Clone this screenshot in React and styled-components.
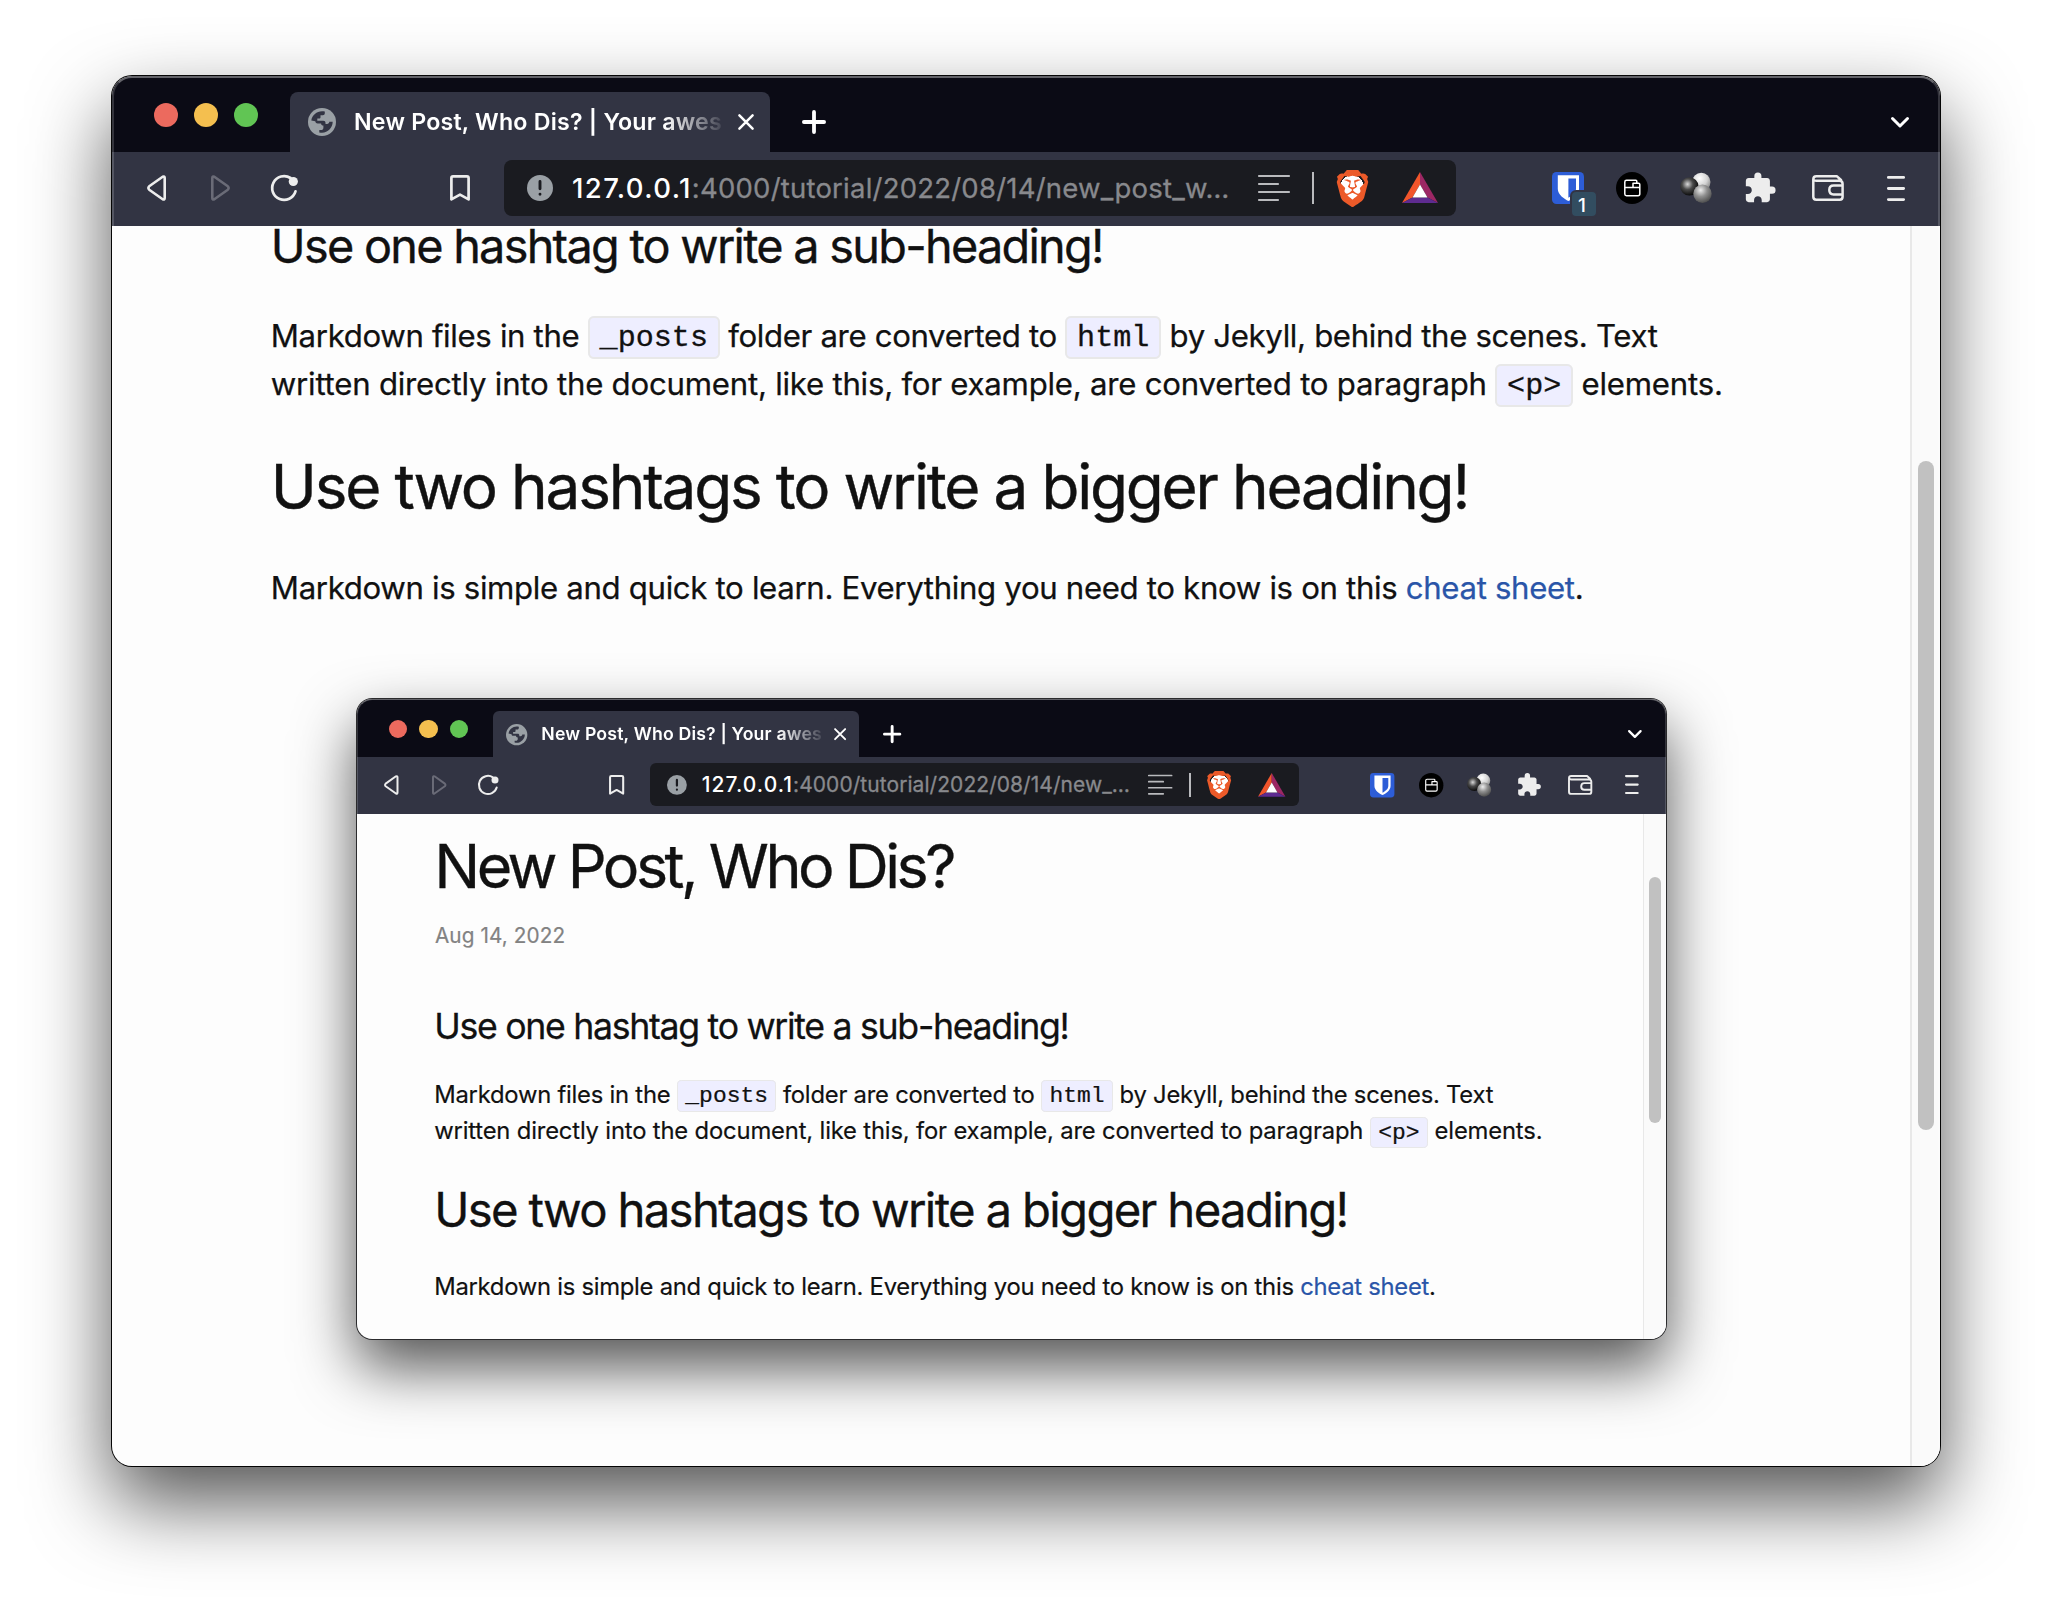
import React from "react";
import styled, { createGlobalStyle, css } from "styled-components";
import { SiBrave } from "react-icons/si";
import { MdExtension } from "react-icons/md";

/* Every length is expressed in window units, so a window can be drawn at any scale. */
const u = (n) => `calc(${n} * var(--u))`;

const GlobalStyle = createGlobalStyle`
  body {
    margin: 0;
    background: #fff;
    font-family: Inter, "Liberation Sans", sans-serif;
    -webkit-font-smoothing: antialiased;
  }
  *, *::before, *::after { box-sizing: border-box; }
`;

const Desktop = styled.main`
  width: 2052px;
  height: 1614px;
  padding: 76px 112px 148px;
  overflow: hidden;
`;

/* ---------- window frame ---------- */

const Frame = styled.section`
  --u: ${(p) => p.$scale}px;
  position: relative;
  display: flex;
  flex-direction: column;
  width: ${(p) => p.$width}px;
  height: ${(p) => p.$height}px;
  border-radius: ${u(20)};
  background: #fdfdfd;
  box-shadow: 0 0 0 1px ${(p) => (p.$scale === 1 ? "#050505" : "#2b2b2d")},
    0 ${u(36)} ${u(80)} rgba(0, 0, 0, 0.68);

  &::after {
    content: "";
    position: absolute;
    inset: 0;
    border-radius: inherit;
    border: ${u(2)} solid rgba(255, 255, 255, 0.17);
    border-top-color: rgba(255, 255, 255, 0.36);
    pointer-events: none;
  }
`;

const TitleBar = styled.header`
  display: flex;
  align-items: flex-end;
  flex: none;
  height: ${u(76)};
  padding: 0 ${u(31)} 0 ${u(42)};
  background: #0b0b15;
  border-radius: ${u(20)} ${u(20)} 0 0;
`;

const Lights = styled.div`
  display: flex;
  gap: ${u(16)};
  margin-right: ${u(32)};
  padding-bottom: ${u(25)};
`;

const Light = styled.span`
  width: ${u(24)};
  height: ${u(24)};
  border-radius: 50%;
  background: ${(p) => p.$color};
`;

const Tab = styled.div`
  display: flex;
  align-items: center;
  width: ${u(480)};
  height: ${u(60)};
  padding: 0 ${u(16)} 0 ${u(18)};
  border-radius: ${u(8)} ${u(8)} 0 0;
  background: #323443;
  color: #fff;
`;

const TabTitle = styled.span`
  flex: 1;
  min-width: 0;
  margin: 0 ${u(14)} 0 ${u(18)};
  white-space: nowrap;
  font-size: ${u(23.2)};
  font-weight: 600;
  line-height: ${u(32)};
  letter-spacing: ${u(0.22)};
  mask-image: linear-gradient(to right, #000 84%, transparent 101%);
`;

const StripButton = styled.span`
  display: flex;
  align-items: center;
  height: ${u(60)};
  color: #fff;
  ${(p) =>
    p.$end
      ? css`
          margin-left: auto;
        `
      : css`
          margin-left: ${u(32)};
        `}
`;

const Toolbar = styled.nav`
  display: flex;
  align-items: center;
  flex: none;
  height: ${u(74)};
  padding: 0 ${u(12)} ${u(2)} ${u(12.5)};
  background: #323443;
`;

const Slot = styled.span`
  position: relative;
  display: flex;
  align-items: center;
  justify-content: center;
  flex: none;
  width: ${(p) => u(p.$w || 64)};
  height: ${u(56)};
  color: ${(p) => (p.$dim ? "#6a6b77" : "#ededed")};
`;

const Spacer = styled.span`
  flex: 1;
`;

const AddressBar = styled.div`
  display: flex;
  align-items: center;
  flex: none;
  width: ${(p) => u(p.$w)};
  height: ${u(56)};
  margin: 0 ${(p) => u(p.$gap)} 0 ${u(12)};
  padding: 0 ${u(18)} 0 ${u(23)};
  border-radius: ${u(8)};
  background: #1a1b20;
`;

const Url = styled.span`
  flex: 1;
  min-width: 0;
  margin-left: ${u(19)};
  white-space: nowrap;
  color: #88898d;
  font-size: ${u(27.5)};
  line-height: ${u(36)};
  letter-spacing: ${(p) => u(p.$track)};
  -webkit-text-stroke: 0.3px currentColor;
`;

const Host = styled.span`
  color: #fff;
  font-weight: 500;
  letter-spacing: ${u(1.4)};
  -webkit-text-stroke: 0;
`;

const Divider = styled.span`
  width: ${u(2)};
  height: ${u(32)};
  margin: 0 ${u(22)};
  background: #b9babd;
`;

const Badge = styled.span`
  position: absolute;
  left: ${u(34)};
  top: ${u(30)};
  display: flex;
  align-items: center;
  justify-content: center;
  width: ${u(28)};
  height: ${u(28)};
  border: ${u(2)} solid #323443;
  border-radius: ${u(6)};
  background: #324d60;
  color: #fff;
  font-size: ${u(19)};
  font-weight: 500;
  padding: ${u(3)} ${u(4)} 0 0;
`;

const Glyph = styled.svg`
  display: block;
  flex: none;
  width: ${(p) => u(p.$w)};
  height: ${(p) => u(p.$h)};
  overflow: visible;
`;

/* ---------- page ---------- */

const Viewport = styled.div`
  display: flex;
  flex: 1;
  min-height: 0;
`;

const Article = styled.article`
  flex: 1;
  min-width: 0;
  padding-left: ${(p) => u(p.$inset)};
  color: #111;
  white-space: nowrap;
  -webkit-text-stroke: ${u(0.25)} currentColor;
`;

const PostTitle = styled.h1`
  margin: 0;
  padding-top: ${u(26.3)};
  font-size: ${u(80)};
  font-weight: 400;
  line-height: ${u(84)};
  letter-spacing: ${u(-4.6)};
  -webkit-text-stroke-width: ${u(0.4)};
`;

const PostDate = styled.time`
  display: block;
  margin: ${u(29.7)} 0 ${u(79)} ${u(1)};
  color: #828282;
  font-size: ${u(27.2)};
  line-height: ${u(40)};
  letter-spacing: ${u(0.12)};
`;

const SubHeading = styled.h3`
  margin: 0 0 ${u(45.7)};
  font-size: ${u(46.8)};
  font-weight: 400;
  line-height: ${u(40)};
  letter-spacing: ${u(-1.72)};
  -webkit-text-stroke-width: ${u(0.35)};
`;

const Heading = styled.h2`
  margin: ${u(43.2)} 0 ${u(40.7)};
  font-size: ${u(62)};
  font-weight: 400;
  line-height: ${u(72)};
  letter-spacing: ${u(-2.2)};
  -webkit-text-stroke-width: ${u(0.4)};
`;

const Paragraph = styled.p`
  margin: 0;
  font-size: ${u(31.2)};
  line-height: ${u(48)};
  letter-spacing: ${u(-0.34)};
`;

const Line = styled.span`
  display: block;
  height: ${u(48)};
  letter-spacing: ${(p) => u(p.$track)};
`;

const Code = styled.code`
  position: relative;
  top: ${u(-0.5)};
  padding: ${u(2.8)} ${u(9.8)} ${u(2)};
  border: ${u(2)} solid #e8e8e8;
  border-radius: ${u(6)};
  background: #eeeeff;
  font-family: "Liberation Mono", "DejaVu Sans Mono", monospace;
  font-size: ${u(30.1)};
  line-height: 1;
  letter-spacing: 0;
  -webkit-text-stroke-width: ${u(0.3)};
`;

const Link = styled.a`
  color: #2a55a8;
  text-decoration: none;
`;

const Scrollbar = styled.aside`
  display: flex;
  justify-content: center;
  align-items: flex-start;
  flex: none;
  width: ${u(30)};
  padding-top: ${(p) => u(p.$top)};
  border-left: ${u(2)} solid #e8e8e8;
  border-bottom-right-radius: ${u(20)};
  background: #fafafa;
`;

const Thumb = styled.span`
  width: ${u(16)};
  height: ${(p) => u(p.$length)};
  border-radius: ${u(8)};
  background: #c1c1c1;
`;

const Figure = styled.div`
  margin: 87.7px 0 0 86px;
  white-space: normal;
  -webkit-text-stroke-width: 0;
`;

/* ---------- icons ---------- */

const line = { fill: "none", stroke: "currentColor", strokeLinecap: "round", strokeLinejoin: "round" };

const Globe = () => (
  <Glyph $w={28} $h={28} viewBox="0 0 28 28">
    <circle cx="14" cy="14" r="14" fill="#9aa0a5" />
    <path
      fill="#323443"
      d="M3.3 12.4C4.1 7.2 8.6 3.2 14 3.2c1 0 1.900.1 2.800.4v1.600c0 1.200-.8 2-2 2h-2.300v2c0 .8-.5 1.300-1.300 1.300H9.300v2.300h6c1.400 0 2.200.9 2.200 2.200v1h1.600c1.200 0 2.200-.9 2.200-2.200h3.400c-.1 5.900-4.800 10.900-10.700 10.900-1 0-1.800-.1-2.700-.3v-2.300h1.800c1.300 0 2.300-.9 2.300-2.300v-2.200c-1.400 0-2.300-.9-2.300-2.200H9.600c-1.400 0-2.300-.9-2.300-2.100z"
    />
  </Glyph>
);

const Close = () => (
  <Glyph $w={16} $h={16} viewBox="0 0 16 16">
    <path {...line} strokeWidth="2.500" d="M1.400 1.400 14.600 14.600M14.600 1.400 1.400 14.600" />
  </Glyph>
);

const Plus = () => (
  <Glyph $w={24} $h={24} viewBox="0 0 24 24">
    <path {...line} strokeWidth="3.800" d="M12 1.900V22.100M1.900 12H22.100" />
  </Glyph>
);

const ChevronDown = () => (
  <Glyph $w={18} $h={11} viewBox="0 0 18 11">
    <path {...line} strokeWidth="3" d="M1.500 1.500 9 9 16.500 1.500" />
  </Glyph>
);

const Triangle = ({ flip }) => (
  <Glyph $w={19} $h={26} viewBox="0 0 19 26">
    <path
      {...line}
      strokeWidth="2.600"
      transform={flip ? "translate(19 0) scale(-1 1)" : undefined}
      d="M15.700 1.700 2.200 11.300Q.5 13 2.200 14.700L15.700 24.300Q17.700 25.100 17.700 23V3Q17.700.9 15.700 1.700Z"
    />
  </Glyph>
);

const Reload = () => (
  <Glyph $w={27} $h={26} viewBox="0 0 27 26">
    <path {...line} strokeWidth="2.700" d="M24.500 16.400A11.900 11.900 0 1 1 19.500 3" />
    <circle cx="22.300" cy="6.500" r="4.600" fill="currentColor" />
  </Glyph>
);

const Bookmark = () => (
  <Glyph $w={20} $h={26} viewBox="0 0 20 26">
    <path {...line} strokeWidth="2.700" d="M3 1.400H17Q18.600 1.400 18.600 3V24.400L10 19.600 1.400 24.400V3Q1.400 1.400 3 1.400Z" />
  </Glyph>
);

const Info = () => (
  <Glyph $w={26} $h={26} viewBox="0 0 26 26">
    <circle cx="13" cy="13" r="13" fill="#9aa0a5" />
    <path stroke="#1a1b20" strokeWidth="2.900" strokeLinecap="round" d="M13 6.400V13.800M13 19.200V19.300" />
  </Glyph>
);

const Reader = () => (
  <Glyph $w={32} $h={28} viewBox="0 0 32 28">
    <path stroke="#b9babd" strokeWidth="2.200" strokeLinecap="round" d="M1 2H31M1 10H20M1 18H31M1 26H20" />
  </Glyph>
);

const BraveMark = styled.span`
  display: flex;
  align-items: center;
  justify-content: center;
  flex: none;
  width: ${u(32)};
  height: ${u(36)};
  margin-right: ${u(34)};
  background: radial-gradient(ellipse 38% 36% at 50% 50%, #fff 98%, transparent 100%);
  color: #ec5a29;

  svg {
    display: block;
    flex: none;
    width: ${u(37)};
    height: ${u(37)};
  }
`;

const Bat = () => (
  <Glyph $w={36} $h={32} viewBox="0 0 36 32">
    <path fill="#f1552b" d="M18 0 0 31 10.500 25.500 18 12.500Z" />
    <path fill="#9c2764" d="M18 0 36 31 25.500 25.500 18 12.500Z" />
    <path fill="#5e2b90" d="M0 31H36L25.500 25.500H10.500Z" />
    <path fill="#fff" d="M18 12.500 25.500 25.500H10.500Z" />
  </Glyph>
);

const Shield = () => (
  <Glyph $w={32} $h={32} viewBox="0 0 32 32">
    <rect width="32" height="32" rx="4.500" fill="#2d5dd7" />
    <path fill="#fff" d="M5.800 3.300H27V17C27 22.800 20.500 27 16.400 29 12.300 27 5.800 22.800 5.800 17Z" />
    <path fill="#2d5dd7" d="M16.400 6.500H24V17C24 21 19.500 24.200 16.400 25.800Z" />
  </Glyph>
);

const BoxWallet = () => (
  <Glyph $w={32} $h={32} viewBox="0 0 32 32">
    <circle cx="16" cy="16" r="16" fill="#000" />
    <path
      {...line}
      stroke="#fff"
      strokeWidth="1.500"
      d="M20.800 11.300V9.200Q20.800 8.200 19.800 8.200H10.500Q8.800 8.200 8.800 9.900V22Q8.800 23.700 10.500 23.700H22Q23.800 23.700 23.800 22V12.500Q23.800 11.300 22.600 11.300H17V15.600M8.800 15.600H23.800"
    />
  </Glyph>
);

const Spheres = () => (
  <Glyph $w={32} $h={32} viewBox="0 0 32 32">
    <defs>
      <radialGradient id="sphere-light" cx="0.4" cy="0.3" r="0.7">
        <stop offset="0" stopColor="#fff" />
        <stop offset="0.6" stopColor="#d4d4d4" />
        <stop offset="1" stopColor="#8c8c8c" />
      </radialGradient>
      <radialGradient id="sphere-dark" cx="0.4" cy="0.38" r="0.65">
        <stop offset="0" stopColor="#d8d8d8" />
        <stop offset="0.45" stopColor="#4a4a4a" />
        <stop offset="1" stopColor="#050505" />
      </radialGradient>
      <radialGradient id="sphere-mid" cx="0.4" cy="0.3" r="0.7">
        <stop offset="0" stopColor="#eee" />
        <stop offset="0.5" stopColor="#8f8f8f" />
        <stop offset="1" stopColor="#4f4f4f" />
      </radialGradient>
    </defs>
    <circle cx="21.300" cy="10" r="9.200" fill="url(#sphere-light)" />
    <circle cx="9.400" cy="14.400" r="9.200" fill="url(#sphere-dark)" />
    <circle cx="22.500" cy="21.800" r="9.200" fill="url(#sphere-mid)" />
  </Glyph>
);

const Puzzle = styled(MdExtension)`
  width: ${u(34)};
  height: ${u(34)};
`;

const Wallet = () => (
  <Glyph $w={32} $h={26} viewBox="0 0 32 26">
    <path
      {...line}
      strokeWidth="2.500"
      d="M30.600 9V21.800Q30.600 24.800 27.600 24.800H4.300Q1.300 24.800 1.300 21.800V4.300Q1.300 1.300 4.300 1.300H25L29 5M1.500 5.200Q3 5.800 4.500 5.800H27.500Q30.600 5.800 30.600 9M30.600 10.600H21.600Q17.300 10.600 17.300 15T21.600 19.400H30.600"
    />
  </Glyph>
);

const Menu = () => (
  <Glyph $w={18} $h={25} viewBox="0 0 18 25">
    <path {...line} strokeWidth="2.900" d="M1.400 1.400H16.600M1.400 12.500H16.600M1.400 23.600H16.600" />
  </Glyph>
);

/* ---------- composition ---------- */

function BrowserWindow({
  scale = 1,
  width,
  height,
  path,
  pathTrack,
  barWidth,
  barGap,
  badge,
  inset,
  thumbTop,
  thumbLength,
  children,
}) {
  return (
    <Frame $scale={scale} $width={width} $height={height}>
      <TitleBar>
        <Lights>
          <Light $color="#ec6a5e" />
          <Light $color="#f4bf4f" />
          <Light $color="#61c554" />
        </Lights>
        <Tab>
          <Globe />
          <TabTitle>New Post, Who Dis? | Your awes</TabTitle>
          <Close />
        </Tab>
        <StripButton>
          <Plus />
        </StripButton>
        <StripButton $end>
          <ChevronDown />
        </StripButton>
      </TitleBar>
      <Toolbar>
        <Slot><Triangle /></Slot>
        <Slot $dim><Triangle flip /></Slot>
        <Slot><Reload /></Slot>
        <Spacer />
        <Slot><Bookmark /></Slot>
        <AddressBar $w={barWidth} $gap={barGap}>
          <Info />
          <Url $track={pathTrack}>
            <Host>127.0.0.1</Host>
            {path}
          </Url>
          <Reader />
          <Divider />
          <BraveMark><SiBrave /></BraveMark>
          <Bat />
        </AddressBar>
        <Slot>
          <Shield />
          {badge && <Badge>{badge}</Badge>}
        </Slot>
        <Slot><BoxWallet /></Slot>
        <Slot><Spheres /></Slot>
        <Slot><Puzzle /></Slot>
        <Slot $w={72}><Wallet /></Slot>
        <Slot $w={64}><Menu /></Slot>
      </Toolbar>
      <Viewport>
        <Article $inset={inset}>{children}</Article>
        <Scrollbar $top={thumbTop}>
          <Thumb $length={thumbLength} />
        </Scrollbar>
      </Viewport>
    </Frame>
  );
}

function PostBody({ tracks }) {
  return (
    <>
      <SubHeading>Use one hashtag to write a sub-heading!</SubHeading>
      <Paragraph>
        <Line $track={tracks[0]}>
          Markdown files in the <Code>_posts</Code> folder are converted to <Code>html</Code> by Jekyll, behind the
          scenes. Text
        </Line>
        <Line $track={tracks[1]}>
          written directly into the document, like this, for example, are converted to paragraph{" "}
          <Code>&lt;p&gt;</Code> elements.
        </Line>
      </Paragraph>
      <Heading>Use two hashtags to write a bigger heading!</Heading>
      <Paragraph>
        Markdown is simple and quick to learn. Everything you need to know is on this <Link>cheat sheet</Link>.
      </Paragraph>
    </>
  );
}

export default function App() {
  return (
    <>
      <GlobalStyle />
      <Desktop>
        <BrowserWindow
          width={1828}
          height={1390}
          path=":4000/tutorial/2022/08/14/new_post_w…"
          pathTrack={0.22}
          barWidth={952}
          barGap={80}
          badge="1"
          inset={158.8}
          thumbTop={235}
          thumbLength={669}
        >
          <PostBody tracks={[-0.35, -0.24]} />
          <Figure>
            <BrowserWindow
              scale={0.763}
              width={1309}
              height={639.5}
              path=":4000/tutorial/2022/08/14/new_…"
              pathTrack={0.1}
              barWidth={850.6}
              barGap={77}
              inset={101.4}
              thumbTop={83}
              thumbLength={323}
            >
              <PostTitle>New Post, Who Dis?</PostTitle>
              <PostDate>Aug 14, 2022</PostDate>
              <PostBody tracks={[-0.3, -0.22]} />
            </BrowserWindow>
          </Figure>
        </BrowserWindow>
      </Desktop>
    </>
  );
}
